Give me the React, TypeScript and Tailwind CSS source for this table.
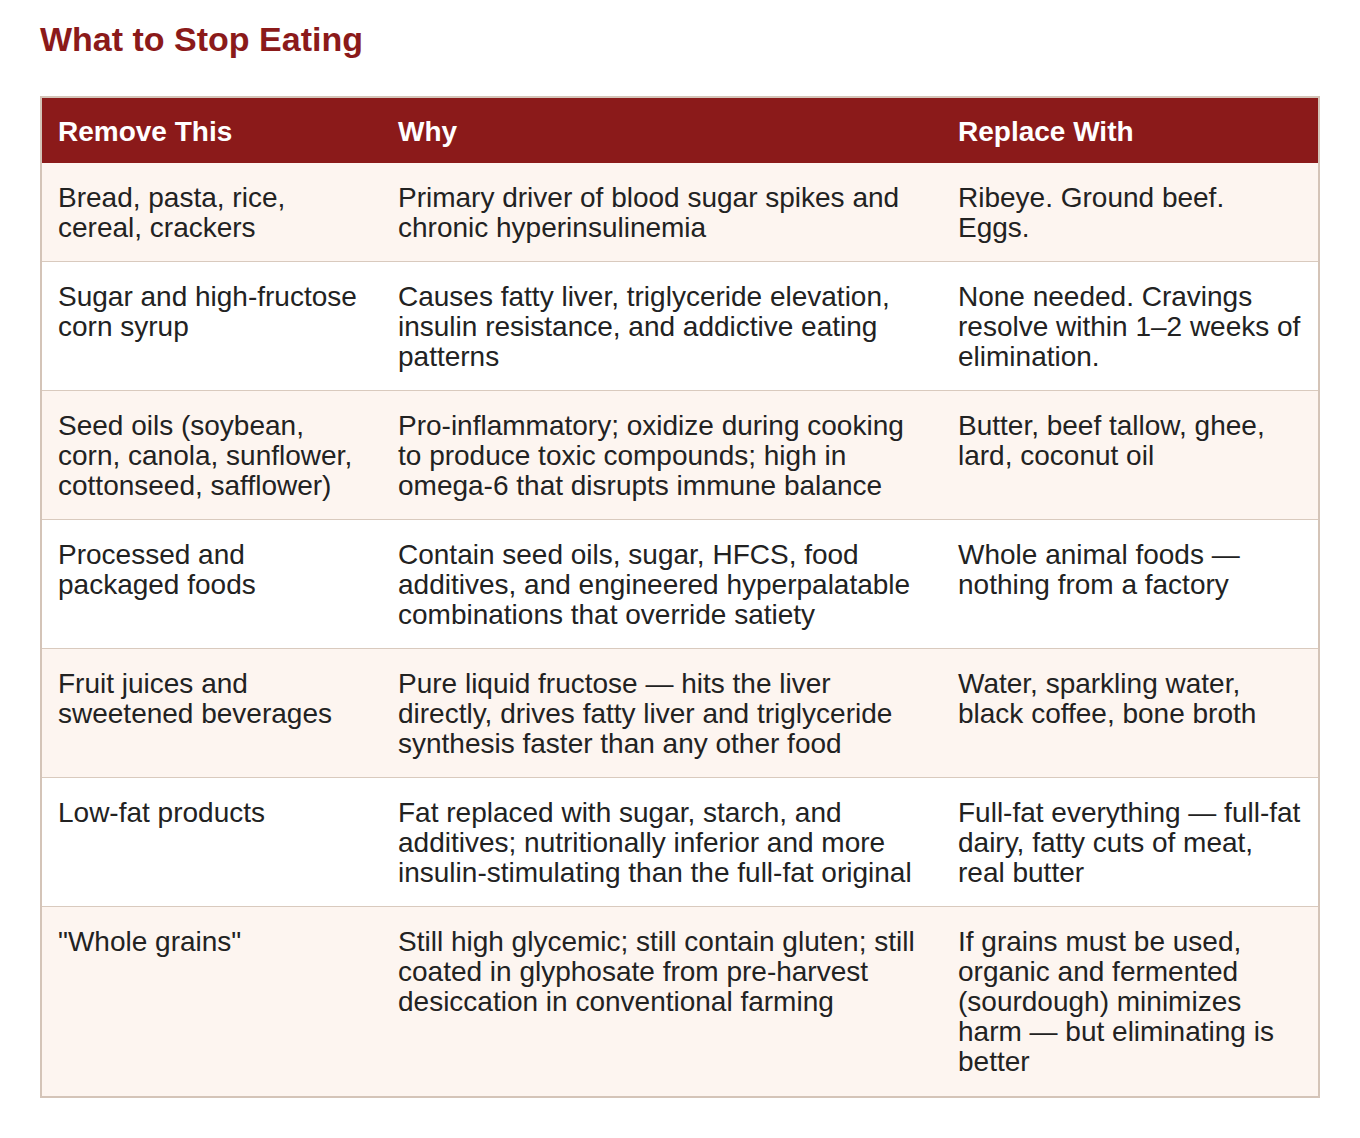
const rows: [string, string, string][] = [
  [
    "Bread, pasta, rice, cereal, crackers",
    "Primary driver of blood sugar spikes and chronic hyperinsulinemia",
    "Ribeye. Ground beef. Eggs.",
  ],
  [
    "Sugar and high-fructose corn syrup",
    "Causes fatty liver, triglyceride elevation, insulin resistance, and addictive eating patterns",
    "None needed. Cravings resolve within 1–2 weeks of elimination.",
  ],
  [
    "Seed oils (soybean, corn, canola, sunflower, cottonseed, safflower)",
    "Pro-inflammatory; oxidize during cooking to produce toxic compounds; high in omega-6 that disrupts immune balance",
    "Butter, beef tallow, ghee, lard, coconut oil",
  ],
  [
    "Processed and packaged foods",
    "Contain seed oils, sugar, HFCS, food additives, and engineered hyperpalatable combinations that override satiety",
    "Whole animal foods — nothing from a factory",
  ],
  [
    "Fruit juices and sweetened beverages",
    "Pure liquid fructose — hits the liver directly, drives fatty liver and triglyceride synthesis faster than any other food",
    "Water, sparkling water, black coffee, bone broth",
  ],
  [
    "Low-fat products",
    "Fat replaced with sugar, starch, and additives; nutritionally inferior and more insulin-stimulating than the full-fat original",
    "Full-fat everything — full-fat dairy, fatty cuts of meat, real butter",
  ],
  [
    '"Whole grains"',
    "Still high glycemic; still contain gluten; still coated in glyphosate from pre-harvest desiccation in conventional farming",
    "If grains must be used, organic and fermented (sourdough) minimizes harm — but eliminating is better",
  ],
];

export default function App() {
  return (
    <div className="min-h-screen bg-white px-10 pt-5 pb-10 font-['Liberation_Sans',Arial,sans-serif]">
      {/* Section title */}
      <h2 className="mb-[37px] text-[34px] font-bold leading-[39px] text-[#8b1a1a]">
        What to Stop Eating
      </h2>

      <table className="w-full table-fixed border-collapse border-2 border-[#d4c4b8] text-left">
        <colgroup>
          <col className="w-[341px]" />
          <col className="w-[560px]" />
          <col />
        </colgroup>
        <thead>
          <tr className="bg-[#8b1a1a] text-white">
            <th className="px-4 pt-[19px] pb-[16px] text-[28px] font-bold leading-[30px]">Remove This</th>
            <th className="px-4 pt-[19px] pb-[16px] text-[28px] font-bold leading-[30px]">Why</th>
            <th className="px-4 pt-[19px] pb-[16px] text-[28px] font-bold leading-[30px]">Replace With</th>
          </tr>
        </thead>
        <tbody>
          {rows.map((row, i) => (
            <tr
              key={i}
              className={`${i > 0 ? "border-t border-[#d9cabe]" : ""} ${i % 2 === 0 ? "bg-[#fdf5f0]" : "bg-white"}`}
            >
              {row.map((cell, j) => (
                <td
                  key={j}
                  className={`px-4 pt-[20px] align-top text-[28px] leading-[30px] text-[#222222] ${i === rows.length - 1 ? "pb-[19px]" : "pb-[18px]"}`}
                >
                  {cell}
                </td>
              ))}
            </tr>
          ))}
        </tbody>
      </table>
    </div>
  );
}
